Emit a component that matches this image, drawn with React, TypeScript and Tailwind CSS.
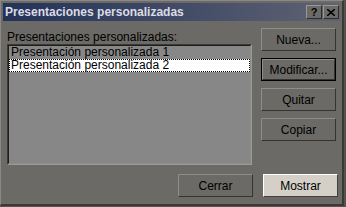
import React from "react";

const font = { fontFamily: '"Liberation Sans", Arial, sans-serif' };

function Btn({ label, light, def }: { label: string; light?: boolean; def?: boolean }) {
  const base = light
    ? "bg-[#d4d0c8] border-t-white border-l-white border-b-[#404040] border-r-[#404040]"
    : "bg-[#6b6a66] border-t-[#8e8d89] border-l-[#8e8d89] border-b-[#35342f] border-r-[#35342f]";
  return (
    <div className={`w-[75px] h-[23px] ${def ? "border border-black" : ""}`}>
      <div
        className={`w-full h-full border ${base} flex items-center justify-center text-[12px] text-black`}
      >
        {label}
      </div>
    </div>
  );
}

export default function App() {
  return (
    <div className="w-[346px] h-[207px] bg-[#55544f]" style={font}>
      <div className="w-[344px] h-[206px] bg-[#6b6a66] border-t border-l border-t-[#8a8985] border-l-[#8a8985] border-r-2 border-b-2 border-r-[#3a3936] border-b-[#3a3936] p-[2px] flex flex-col">
        <div className="h-[18px] flex items-center justify-between pl-[2px] pr-[1px] bg-gradient-to-r from-[#243258] to-[#5f6373]">
          <span className="text-[12px] font-bold text-[#dcdce4] leading-none">Presentaciones personalizadas</span>
          <div className="flex gap-[1px]">
            <div className="w-[16px] h-[14px] bg-[#6b6a66] border border-t-[#9a9995] border-l-[#9a9995] border-b-[#2e2d2a] border-r-[#2e2d2a] flex items-center justify-center text-[11px] font-bold text-black leading-none">?</div>
            <div className="w-[16px] h-[14px] bg-[#6b6a66] border border-t-[#9a9995] border-l-[#9a9995] border-b-[#2e2d2a] border-r-[#2e2d2a] flex items-center justify-center">
              <svg width="8" height="7" viewBox="0 0 8 7">
                <path d="M0 0 L8 7 M8 0 L0 7" stroke="black" strokeWidth="1.6" />
              </svg>
            </div>
          </div>
        </div>
        <div className="flex pl-[4px] pt-[7px]">
          <div className="flex flex-col w-[245px]">
            <div className="h-[14px] text-[12px] leading-[14px] text-black mt-[2px]">Presentaciones personalizadas:</div>
            <div className="mt-[0px] h-[121px] border border-t-[#3a3a38] border-l-[#3a3a38] border-b-[#9a9a98] border-r-[#9a9a98]">
              <div className="h-full border border-t-[#1e1e1c] border-l-[#1e1e1c] border-b-[#8c8c8a] border-r-[#8c8c8a] bg-[#878787] pt-[0px] text-[12px] text-black">
                <div className="h-[13px] leading-[13px] pl-[2px]">Presentación personalizada 1</div>
                <div className="h-[13px] leading-[11px] pl-[1px] bg-white border border-dotted border-black">Presentación personalizada 2</div>
              </div>
            </div>
          </div>
          <div className="flex flex-col ml-[9px] gap-[7px]">
            <Btn label="Nueva..." />
            <Btn label="Modificar..." def />
            <Btn label="Quitar" />
            <Btn label="Copiar" />
          </div>
        </div>
        <div className="flex justify-end gap-[10px] mt-[9px] pr-[2px]">
          <Btn label="Cerrar" />
          <Btn label="Mostrar" light />
        </div>
      </div>
    </div>
  );
}
